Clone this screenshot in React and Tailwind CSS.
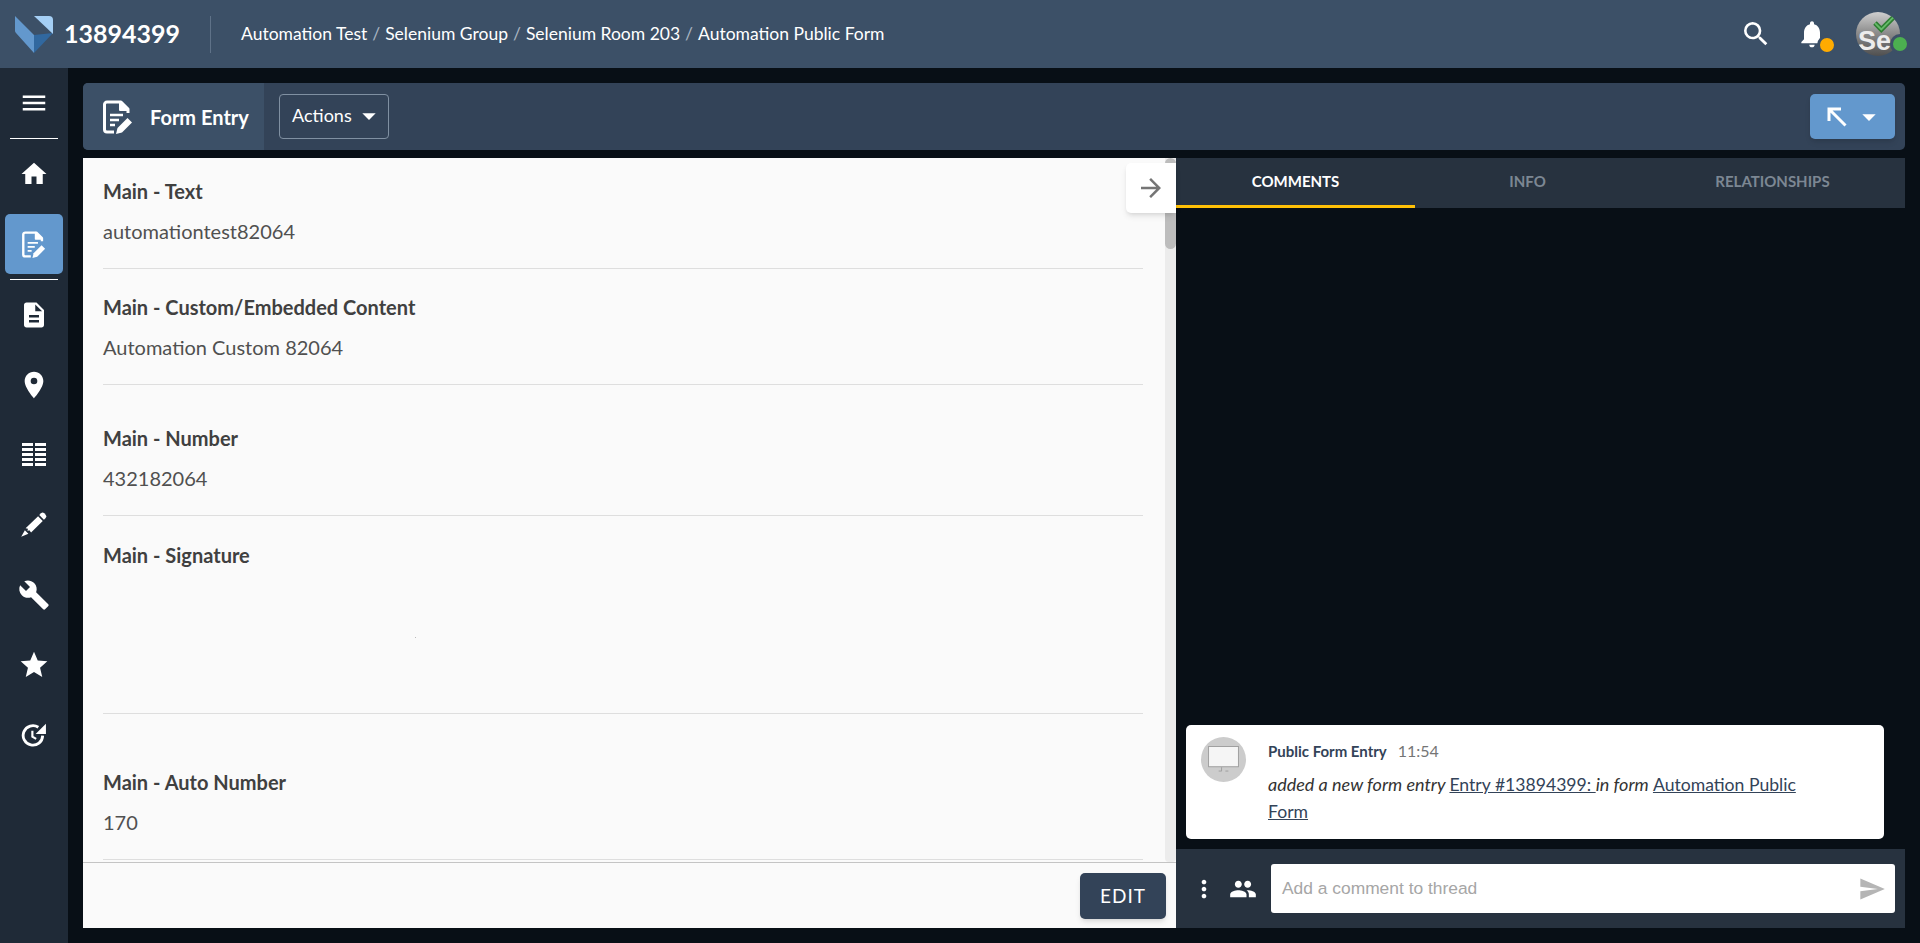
import {
  MdMenu,
  MdHome,
  MdDescription,
  MdPlace,
  MdBuild,
  MdStar,
  MdSearch,
  MdNotifications,
  MdSend,
  MdPeople,
  MdMoreVert,
  MdArrowForward,
  MdArrowDropDown,
} from 'react-icons/md'

function FormEntryIcon({ className }) {
  return (
    <svg viewBox="0 0 30 34" className={className} fill="none">
      <path d="M25 13V9l-7-7H4a2.5 2.5 0 0 0-2.5 2.5v25A2.5 2.5 0 0 0 4 32h7" stroke="currentColor" strokeWidth="3" strokeLinejoin="round" />
      <path d="M17 2v8h8z" fill="currentColor" stroke="currentColor" strokeWidth="2" strokeLinejoin="round" />
      <path d="M7 15h13M7 20h9M7 25h5" stroke="currentColor" strokeWidth="2.4" />
      <path d="M13 34l1.5-6 10-10 4.5 4.5-10 10z" fill="currentColor" />
    </svg>
  )
}

function Logo() {
  return (
    <svg viewBox="0 0 38 38" className="h-[38px] w-[38px]">
      <path d="M0 1 19 20v18L1 18a3 3 0 0 1-1-2z" fill="#6398cd" />
      <path d="M19 20 38 18 19 38z" fill="#31689f" />
      <path d="M19 1h15a4 4 0 0 1 4 4v14z" fill="#a5cff5" />
    </svg>
  )
}

function TableIcon() {
  return (
    <svg viewBox="0 0 24 24" className="h-6 w-6" fill="#fff">
      <path d="M0 0h11v3H0zM13 0h11v3H13zM0 5h11v3H0zM13 5h11v3H13zM0 10h11v3H0zM13 10h11v3H13zM0 15h11v3H0zM13 15h11v3H13zM0 20h11v3H0zM13 20h11v3H13z" />
    </svg>
  )
}

function PencilIcon() {
  return (
    <svg viewBox="0 0 24 24" className="h-[28px] w-[28px]" fill="#fff">
      <path d="M16.5 3.5 18 2a2 2 0 0 1 2.8 0L22 3.2a2 2 0 0 1 0 2.8l-1.5 1.5z" />
      <path d="M15.5 4.5 19.5 8.5 9.5 18.5 8 16.6l-1.6.6.4-2-2-.4z" />
      <path d="M4.2 16.6 7.2 19.6 1 22z" />
    </svg>
  )
}

function HistoryIcon() {
  return (
    <svg viewBox="0 0 24 24" className="mb-[2px] h-[26px] w-[26px]" fill="none" stroke="#fff">
      <path d="M16 5.8A9 9 0 1 0 20 13.5" strokeWidth="2.6" />
      <path d="M23 2.5v9.5h-9.5z" fill="#fff" strokeWidth="0" />
      <path d="M10.5 9v5.5l3.5 2" strokeWidth="2" />
    </svg>
  )
}

function Avatar() {
  return (
    <div className="relative h-[44px] w-[44px]">
      <div className="flex h-[44px] w-[44px] items-end overflow-hidden rounded-full bg-[linear-gradient(180deg,#cfcfcf_0%,#8f8f8f_45%,#4f4f4f_100%)]">
        <span className="mb-[2px] ml-[2px] text-[27px] font-bold leading-[26px] text-[#ececec] [font-family:'Liberation_Sans',sans-serif]">Se</span>
      </div>
      <svg viewBox="0 0 24 20" className="absolute left-[17px] top-[3px] h-[18px] w-[22px]">
        <path d="M2 9l7 7L22 3" fill="none" stroke="#2e7d32" strokeWidth="5.5" />
        <path d="M2 9l7 7L22 3" fill="none" stroke="#66bb6a" strokeWidth="2" />
      </svg>
      <div className="absolute bottom-[2px] right-[-10px] h-[20px] w-[20px] rounded-full border-[3px] border-[#3c5067] bg-[#4caf50]" />
    </div>
  )
}

function Divider() {
  return <div className="mx-auto h-px w-[48px] bg-white" />
}

function NavItem({ children }) {
  return <div className="flex h-[70px] items-center justify-center text-white">{children}</div>
}

function Field({ label, value, heightClass, children }) {
  return (
    <div className={`border-b border-[#dedede] ${heightClass}`}>
      <div className="text-[20px] font-bold leading-[24px] text-[#404040]">{label}</div>
      {value && <div className="mt-[16px] text-[20px] leading-[24px] text-[#505050]">{value}</div>}
      {children}
    </div>
  )
}

export default function App() {
  return (
    <div className="flex h-[943px] w-[1920px] flex-col overflow-hidden bg-[#080f16] [font-family:Lato,'Noto_Sans',sans-serif]">
      <header className="flex h-[68px] shrink-0 items-center bg-[#3c5067] pl-[15px] pr-[20px]">
        <Logo />
        <div className="ml-[11px] text-[25px] font-bold text-white">13894399</div>
        <div className="ml-[30px] h-[37px] w-px bg-[#5f7288]" />
        <nav className="ml-[30px] flex items-center gap-[5px] text-[17.5px] text-white">
          <span>Automation Test</span>
          <span className="text-[#a9b5c2]">/</span>
          <span>Selenium Group</span>
          <span className="text-[#a9b5c2]">/</span>
          <span>Selenium Room 203</span>
          <span className="text-[#a9b5c2]">/</span>
          <span>Automation Public Form</span>
        </nav>
        <div className="ml-auto flex items-center">
          <MdSearch className="h-[32px] w-[32px] text-white" />
          <div className="relative ml-[24px] mr-[28px]">
            <MdNotifications className="h-[32px] w-[32px] text-white" />
            <div className="absolute bottom-[-5px] right-[-9px] h-[20px] w-[20px] rounded-full border-[3px] border-[#3c5067] bg-[#ffab00]" />
          </div>
          <Avatar />
        </div>
      </header>

      <div className="flex min-h-0 flex-1">
        <aside className="w-[68px] shrink-0 bg-[#1f2a37]">
          <div className="flex h-[70px] items-center justify-center text-white">
            <MdMenu className="h-[30px] w-[30px]" />
          </div>
          <Divider />
          <div className="flex h-[75px] items-center justify-center pb-[6px] text-white">
            <MdHome className="h-[30px] w-[30px]" />
          </div>
          <div className="mx-[5px] flex h-[60px] items-center justify-center rounded-[5px] bg-[#6398cd] text-white">
            <FormEntryIcon className="h-[27px] w-[24px]" />
          </div>
          <div className="mt-[5px]">
            <Divider />
          </div>
          <NavItem>
            <MdDescription className="h-[30px] w-[30px]" />
          </NavItem>
          <NavItem>
            <MdPlace className="h-[32px] w-[32px]" />
          </NavItem>
          <NavItem>
            <TableIcon />
          </NavItem>
          <NavItem>
            <PencilIcon />
          </NavItem>
          <NavItem>
            <MdBuild className="h-[32px] w-[32px]" />
          </NavItem>
          <NavItem>
            <MdStar className="h-[32px] w-[32px]" />
          </NavItem>
          <NavItem>
            <HistoryIcon />
          </NavItem>
        </aside>

        <main className="flex min-w-0 flex-1 flex-col pb-[15px] pl-[15px] pr-[15px] pt-[15px]">
          <div className="flex h-[67px] shrink-0 items-center rounded-[5px] bg-[#334358] pr-[10px]">
            <div className="flex h-full w-[181px] items-center rounded-l-[5px] bg-[#3c5067] pl-[20px] text-white">
              <FormEntryIcon className="h-[34px] w-[30px]" />
              <span className="ml-[17px] text-[20px] font-bold">Form Entry</span>
            </div>
            <button className="ml-[15px] flex h-[45px] w-[110px] items-center rounded-[4px] border border-[#8090a2] pb-[2px] pl-[12px] text-[18px] text-white">
              Actions
              <MdArrowDropDown className="ml-[1px] h-[32px] w-[32px]" />
            </button>
            <button className="ml-auto flex h-[45px] w-[85px] items-center justify-center gap-[6px] rounded-[5px] bg-[#6398cd] pl-[6px] text-white shadow-md">
              <svg viewBox="0 0 20 20" className="h-[20px] w-[20px]" fill="none" stroke="#fff" strokeWidth="3">
                <path d="M18.5 18.5 2.5 2.5M2 14V2h12" />
              </svg>
              <MdArrowDropDown className="h-[32px] w-[32px]" />
            </button>
          </div>

          <div className="mt-[8px] flex min-h-0 flex-1">
            <section className="relative flex w-[1093px] shrink-0 flex-col bg-[#fafafa]">
              <div className="flex min-h-0 flex-1">
                <div className="flex-1 pl-[20px] pr-[22px] pt-[21px]">
                  <Field label="Main - Text" value="automationtest82064" heightClass="h-[90px]" />
                  <Field label="Main - Custom/Embedded Content" value="Automation Custom 82064" heightClass="mt-[26px] h-[90px]" />
                  <Field label="Main - Number" value="432182064" heightClass="mt-[41px] h-[90px]" />
                  <Field label="Main - Signature" heightClass="mt-[27px] h-[171px]">
                    <div className="ml-[312px] mt-[70px] h-px w-px bg-[#bbbbbb]" />
                  </Field>
                  <Field label="Main - Auto Number" value="170" heightClass="mt-[56px] h-[90px]" />
                </div>
                <div className="w-[11px] shrink-0 rounded-b-[4px] bg-[#ececec]">
                  <div className="h-[91px] rounded-[6px] bg-[#bdbdbd]" />
                </div>
              </div>
              <div className="flex h-[66px] shrink-0 items-start justify-end border-t border-[#c4c4c4] pr-[10px] pt-[10px]">
                <button className="h-[46px] w-[86px] rounded-[5px] bg-[#334358] text-[19px] tracking-[1px] text-white shadow-md">EDIT</button>
              </div>
              <button className="absolute right-0 top-[5px] flex h-[50px] w-[50px] items-center justify-center rounded-l-[5px] bg-white text-[#757575] shadow-md">
                <MdArrowForward className="h-[30px] w-[30px]" />
              </button>
            </section>

            <section className="flex min-w-0 flex-1 flex-col">
              <div className="flex h-[50px] shrink-0 items-stretch bg-[#27323f] text-[15px] font-bold">
                <div className="flex w-[239px] items-center justify-center border-b-[3px] border-[#ffc107] text-white">COMMENTS</div>
                <div className="flex w-[225px] items-center justify-center border-b-[3px] border-transparent text-[#7c8793]">INFO</div>
                <div className="flex flex-1 items-center justify-center border-b-[3px] border-transparent text-[#7c8793]">RELATIONSHIPS</div>
              </div>
              <div className="flex min-h-0 flex-1 flex-col justify-end px-[10px] pb-[10px]">
                <div className="flex h-[114px] w-[698px] rounded-[5px] bg-white pl-[15px] pt-[12px]">
                  <div className="flex h-[45px] w-[45px] shrink-0 items-center justify-center rounded-full bg-[#cccccc]">
                    <svg viewBox="0 0 32 28" className="h-[27px] w-[31px]">
                      <rect x="0.5" y="0.5" width="31" height="21" fill="#f5f5f5" stroke="#9e9e9e" />
                      <path d="M11 26h3v-4M21 26h-3" fill="none" stroke="#9e9e9e" />
                    </svg>
                  </div>
                  <div className="ml-[22px] pr-[70px] pt-[3px] text-[18px] leading-[27px] text-[#333]">
                    <div className="flex items-baseline text-[15px] leading-[22px]">
                      <span className="font-bold text-[#334358]">Public Form Entry</span>
                      <span className="ml-[11px] text-[16px] text-[#757575]">11:54</span>
                    </div>
                    <div className="mt-[9px] italic">
                      added a new form entry <a className="text-[17.6px] not-italic text-[#334358] underline">Entry #13894399: </a>in form <a className="text-[17.6px] not-italic text-[#334358] underline">Automation Public</a> <a className="text-[17.6px] not-italic text-[#334358] underline">Form</a>
                    </div>
                  </div>
                </div>
              </div>
              <div className="flex h-[79px] shrink-0 items-center bg-[#27323f] pl-[14px] pr-[10px]">
                <MdMoreVert className="h-[28px] w-[28px] text-white" />
                <MdPeople className="ml-[11px] h-[28px] w-[28px] text-white" />
                <div className="ml-[14px] flex h-[49px] flex-1 items-center justify-between rounded-[3px] bg-white pl-[11px] pr-[9px] text-[17.4px] text-[#a6a6a6] [font-family:'Liberation_Sans',sans-serif]">
                  <span>Add a comment to thread</span>
                  <MdSend className="h-[28px] w-[28px] text-[#b5b5b5]" />
                </div>
              </div>
            </section>
          </div>
        </main>
      </div>
    </div>
  )
}
